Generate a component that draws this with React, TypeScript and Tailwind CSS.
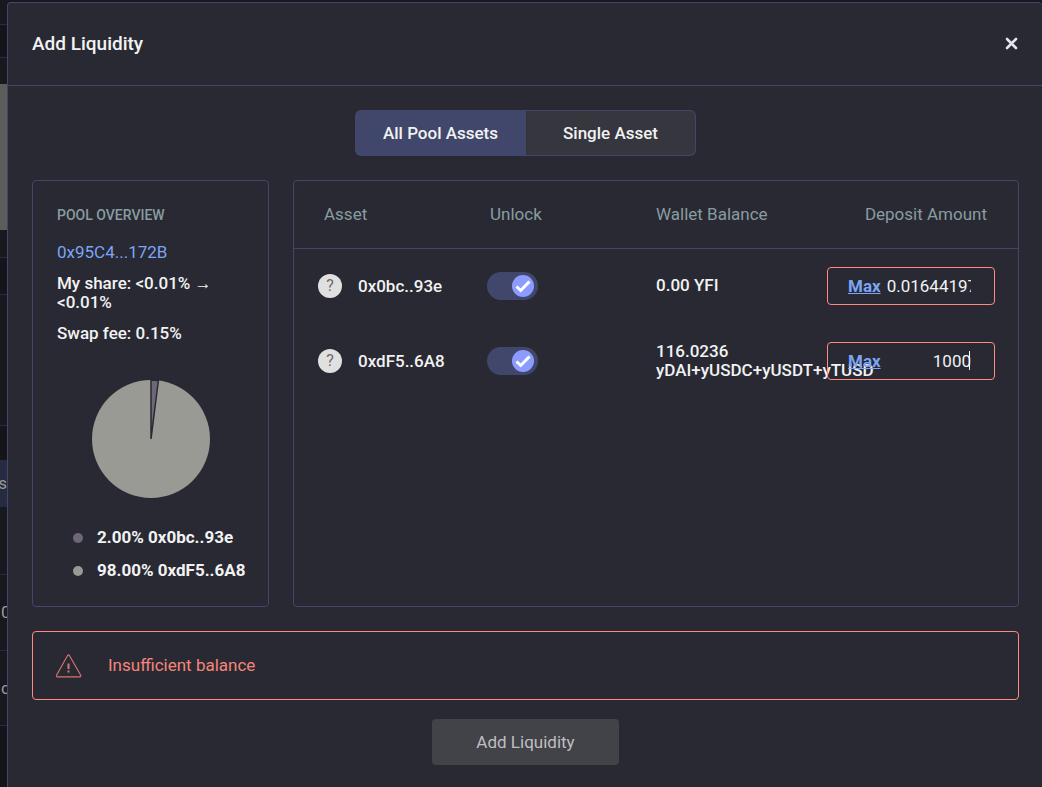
import React, { useState } from "react";

interface Asset {
  name: string;
  share: string;
  balance: string;
  symbol: string;
  amount: string;
  color: string;
  inline: boolean;
}

const assets: Asset[] = [
  {
    name: "0x0bc..93e",
    share: "2.00%",
    balance: "0.00",
    symbol: "YFI",
    amount: "0.0164419774",
    color: "#6f6776",
    inline: true,
  },
  {
    name: "0xdF5..6A8",
    share: "98.00%",
    balance: "116.0236",
    symbol: "yDAI+yUSDC+yUSDT+yTUSD",
    amount: "1000",
    color: "#999a94",
    inline: false,
  },
];

// Sliver of the pool page that stays visible next to the dialog
const PageBehind = () => (
  <div
    aria-hidden="true"
    className="w-[7px] shrink-0 overflow-hidden bg-[#18191f] text-[17px] text-[#9a9a9a]"
  >
    <div className="h-[25px] border-b border-[#282b42]" />
    <div className="h-[33px] border-b border-[#282b42] bg-[#15141a]" />
    <div className="h-[26px]" />
    <div className="h-[146px] bg-[#5c5c59]" />
    <div className="h-7 border-b border-[#282b42]" />
    <div className="h-[37px] border-b border-[#282b42] bg-[#15141a]" />
    <div className="h-[131px] border-b border-[#282b42]" />
    <div className="h-[34px] bg-[#15141a]" />
    <div className="flex h-[47px] items-center justify-end bg-[#262b42]">s</div>
    <div className="h-[68px] border-b border-[#282b42]" />
    <div className="flex h-[76px] items-center border-b border-[#282b42] pl-px">0</div>
    <div className="flex h-[75px] items-center border-b border-[#282b42] pl-px">c</div>
    <div className="h-[61px] bg-[#15141a]" />
  </div>
);

const PieChart = () => (
  <svg viewBox="0 0 120 120" className="mx-auto block size-[120px]" role="img" aria-label="Pool weights">
    <circle cx="60" cy="60" r="59" fill="#999a94" />
    <path
      d="M60 60 L60 1 A59 59 0 0 1 67.4 1.5 Z"
      fill="#6f6776"
      stroke="#282932"
      strokeWidth="1.5"
    />
  </svg>
);

const Toggle = ({ label }: { label: string }) => {
  const [on, setOn] = useState(true);
  return (
    <label className="relative block h-7 w-[51px] cursor-pointer">
      <input
        type="checkbox"
        aria-label={label}
        checked={on}
        onChange={(e) => setOn(e.target.checked)}
        className="peer block h-7 w-[51px] appearance-none rounded-full bg-[#41476b]"
      />
      <span className="pointer-events-none absolute top-[3px] left-1 flex size-[22px] items-center justify-center rounded-full bg-[#8c9bff] peer-checked:left-[25px]">
        <svg viewBox="0 0 16 16" className="size-4">
          <path d="M1.5 8.5 L5.7 12.5 L14.5 3.5" fill="none" stroke="white" strokeWidth="3" />
        </svg>
      </span>
    </label>
  );
};

const AssetRow = ({ asset }: { asset: Asset }) => {
  const [amount, setAmount] = useState(asset.amount);
  return (
    <tr className="h-[75px]">
      <td className="pl-6">
        <div className="flex items-center gap-4 leading-5">
          <span className="flex size-6 items-center justify-center rounded-full bg-[#e0e0e0] text-base leading-5 text-[#6b6b6b]">
            ?
          </span>
          <span className="font-medium">{asset.name}</span>
        </div>
      </td>
      <td>
        <Toggle label={`Unlock ${asset.name}`} />
      </td>
      <td className="font-medium">
        {asset.balance} {!asset.inline && <br />}
        {asset.symbol}
      </td>
      <td className="pr-[23px]">
        <div className="relative flex h-[38px] items-center rounded border border-[#ff8a7d] pr-[23px] pl-5 leading-5">
          <button type="button" className="font-bold text-[#7ba5f5] underline">
            Max
          </button>
          <input
            type="text"
            aria-label={`Deposit amount of ${asset.name}`}
            value={amount}
            onChange={(e) => setAmount(e.target.value)}
            className={
              asset.inline
                ? "ml-1.5 w-0 flex-1 outline-none"
                : "ml-1.5 w-0 flex-1 text-right outline-none"
            }
          />
          {!asset.inline && <span className="absolute right-6 h-[19px] w-px bg-white" />}
        </div>
      </td>
    </tr>
  );
};

const App: React.FC = () => {
  return (
    <div
      className="flex min-h-screen overflow-hidden bg-[#18191f] text-[17px] leading-[19px] text-[#f2f2f2]"
      style={{ fontFamily: "Roboto, sans-serif" }}
    >
      <PageBehind />
      <div className="flex min-w-0 flex-1 pt-0.5">
        <main
          role="dialog"
          aria-labelledby="dialog-title"
          className="flex-1 rounded-t border-t border-l border-[#41476b] bg-[#282932]"
        >
          {/* HEADER */}
          <header className="flex h-[83px] items-center justify-between border-b border-[#41476b] px-6 pb-0.5">
            <h1 id="dialog-title" className="text-[19px] font-medium">
              Add Liquidity
            </h1>
            <button type="button" aria-label="Close">
              <svg viewBox="0 0 13 13" className="block size-[13px]">
                <path
                  d="M2 2 L11 11 M11 2 L2 11"
                  stroke="#e4e4ea"
                  strokeWidth="2.6"
                  strokeLinecap="round"
                />
              </svg>
            </button>
          </header>

          <div className="pt-6 pr-[23px] pb-[22px] pl-6">
            {/* TABS */}
            <div className="mx-auto flex h-[46px] w-[341px] font-medium">
              <button type="button" className="w-[171px] rounded-l-md bg-[#41476b]">
                All Pool Assets
              </button>
              <button
                type="button"
                className="flex-1 rounded-r-md border border-l-0 border-[#41476b] bg-[#36363f]"
              >
                Single Asset
              </button>
            </div>

            <div className="mt-6 flex gap-6">
              {/* POOL OVERVIEW */}
              <section className="h-[427px] w-[237px] shrink-0 rounded border border-[#41476b] px-6 pt-6">
                <h2 className="mt-px text-sm leading-[19px] font-medium text-[#889ca1] uppercase">
                  Pool overview
                </h2>
                <a href="#pool" className="mt-[18px] block text-[#7ba5f5]">
                  0x95C4...172B
                </a>
                <p className="mt-3 w-40 font-medium">My share: &lt;0.01% → &lt;0.01%</p>
                <p className="mt-3 font-medium">Swap fee: 0.15%</p>
                <div className="mt-9">
                  <PieChart />
                </div>
                <ul className="mt-[29px] flex flex-col gap-3.5 pl-4 font-bold">
                  {assets.map((a) => (
                    <li key={a.name} className="flex items-center gap-3.5 whitespace-nowrap">
                      <span
                        className="size-2.5 shrink-0 rounded-full"
                        style={{ backgroundColor: a.color }}
                      />
                      {a.share} {a.name}
                    </li>
                  ))}
                </ul>
              </section>

              {/* ASSETS */}
              <section className="min-w-0 flex-1 rounded border border-[#41476b]">
                <table className="w-full table-fixed text-left">
                  <thead>
                    <tr className="h-[67px] border-b border-[#41476b] text-[#889ca1]">
                      <th className="w-[193px] pl-[30px] font-normal">Asset</th>
                      <th className="w-[169px] pl-[3px] font-normal">Unlock</th>
                      <th className="font-normal">Wallet Balance</th>
                      <th className="w-[191px] pr-[31px] text-right font-normal">Deposit Amount</th>
                    </tr>
                  </thead>
                  <tbody>
                    {assets.map((a) => (
                      <AssetRow key={a.name} asset={a} />
                    ))}
                  </tbody>
                </table>
              </section>
            </div>

            {/* WARNING */}
            <div
              role="alert"
              className="mt-6 flex h-[69px] items-center gap-[26px] rounded border border-[#ff8a7d] px-[23px] text-[#f5857a]"
            >
              <svg
                viewBox="0 0 26 24"
                className="h-6 w-[26px]"
                fill="none"
                stroke="#d9766e"
                strokeLinejoin="round"
              >
                <path
                  d="M11.6 1.6 Q12.5 .2 13.4 1.6 L24.7 21.2 Q25.2 22.8 23.7 22.9 H1.5 Q0 22.8 .5 21.2 Z"
                  strokeWidth="1.1"
                />
                <path d="M12.5 9.5 V15 M12.5 16.5 V18.5" strokeWidth="2" />
              </svg>
              Insufficient balance
            </div>

            <button
              type="button"
              disabled
              className="mx-auto mt-[19px] block h-[46px] w-[187px] rounded bg-[#424249] text-[#bfbfbf]"
            >
              Add Liquidity
            </button>
          </div>
        </main>
      </div>
    </div>
  );
};

export default App;
